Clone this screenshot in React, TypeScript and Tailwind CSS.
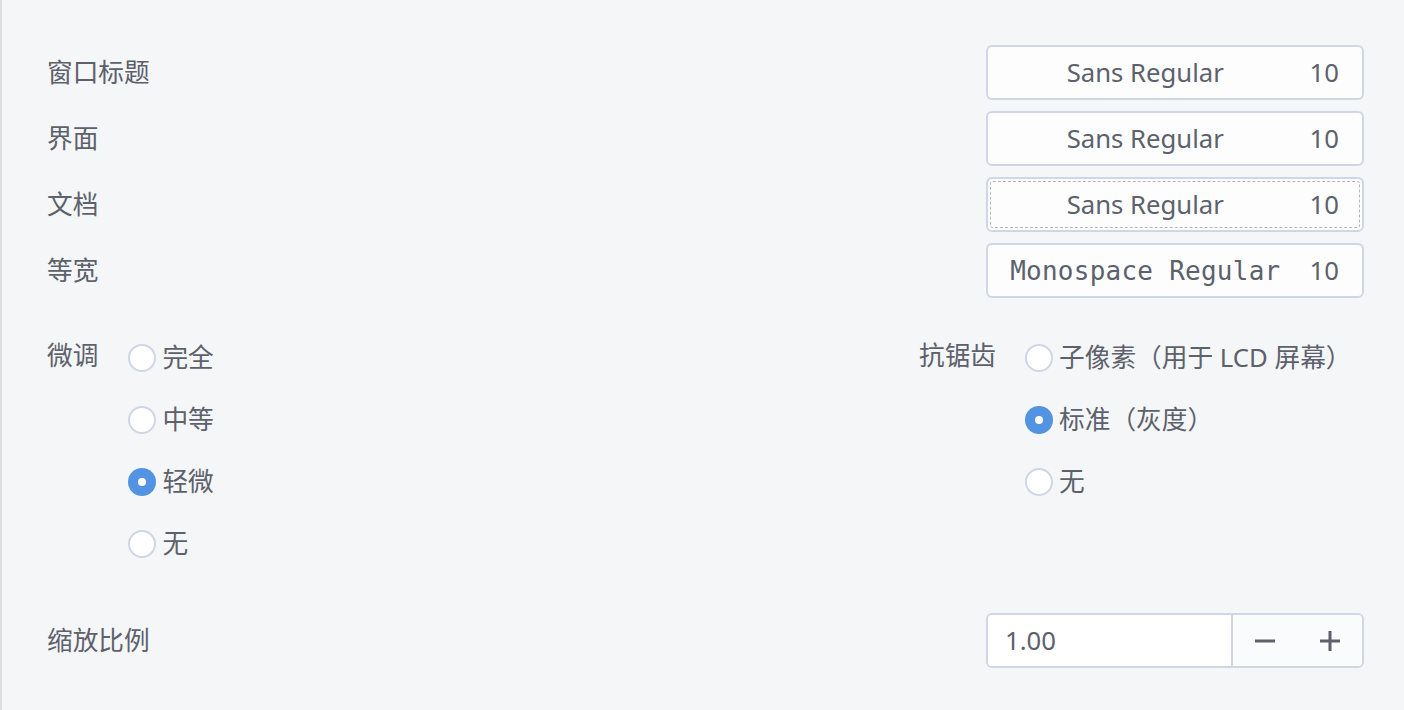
import React from "react";

const FONT = "font-['Noto_Sans','Noto_Sans_CJK_SC',sans-serif]";

function FontButton({ label, mono, focused }: { label: string; mono?: boolean; focused?: boolean }) {
  return (
    <div className="w-[378px] h-[55px] rounded-[6px] border-2 border-[#cfd6e6] bg-[#fdfdfe] p-[2px]">
      <div
        className={
          "h-full w-full rounded-[3px] flex items-center pr-[20px] " +
          (focused ? "border border-dashed border-[#b4b7bd]" : "border border-transparent")
        }
      >
        <div
          className={
            "flex-1 text-center " +
            (mono ? "font-['DejaVu_Sans_Mono',monospace] text-[26px] tracking-[0.25px]" : "")
          }
        >
          {label}
        </div>
        <div className="ml-[10px]">10</div>
      </div>
    </div>
  );
}

function Radio({ label, checked }: { label: string; checked?: boolean }) {
  return (
    <div className="h-[62px] flex items-center gap-[6px]">
      {checked ? (
        <div className="w-[28px] h-[28px] rounded-full bg-[#5294e2] flex items-center justify-center">
          <div className="w-[8px] h-[8px] rounded-full bg-white" />
        </div>
      ) : (
        <div className="w-[28px] h-[28px] rounded-full border-2 border-[#cfd6e6] bg-white" />
      )}
      <span>{label}</span>
    </div>
  );
}

export default function App() {
  return (
    <div
      className={
        "w-[1404px] h-[710px] bg-[#f5f6f7] border-l-2 border-[#dcdfe3] text-[#5c616c] text-[25.7px] leading-none " +
        FONT
      }
    >
      <div className="pl-[45px] pr-[40px] pt-[45px]">
        <div className="flex flex-col gap-[11px]">
          {[
            ["窗口标题", "Sans Regular", false, false],
            ["界面", "Sans Regular", false, false],
            ["文档", "Sans Regular", false, true],
            ["等宽", "Monospace Regular", true, false],
          ].map(([l, f, m, foc]) => (
            <div key={l as string} className="flex items-center justify-between">
              <span>{l as string}</span>
              <FontButton label={f as string} mono={m as boolean} focused={foc as boolean} />
            </div>
          ))}
        </div>

        <div className="flex mt-[29px]">
          <div className="w-[872px] flex gap-[30px]">
            <div className="h-[62px] flex items-center -mt-[2px]">微调</div>
            <div className="flex flex-col">
              <Radio label="完全" />
              <Radio label="中等" />
              <Radio label="轻微" checked />
              <Radio label="无" />
            </div>
          </div>
          <div className="flex gap-[29px]">
            <div className="h-[62px] flex items-center -mt-[2px]">抗锯齿</div>
            <div className="flex flex-col">
              <Radio label="子像素（用于 LCD 屏幕）" />
              <Radio label="标准（灰度）" checked />
              <Radio label="无" />
            </div>
          </div>
        </div>

        <div className="flex items-center justify-between mt-[38px]">
          <span>缩放比例</span>
          <div className="w-[378px] h-[55px] rounded-[6px] border-2 border-[#cfd6e6] flex overflow-hidden">
            <div className="w-[245px] bg-white flex items-center pl-[17px] border-r-2 border-[#cfd6e6]">1.00</div>
            <div className="flex-1 bg-[#fafbfc] flex items-center">
              <div className="flex-1 flex items-center justify-center">
                <svg width="20" height="20" viewBox="0 0 20 20">
                  <rect x="0" y="8.5" width="20" height="3" fill="#5c616c" />
                </svg>
              </div>
              <div className="flex-1 flex items-center justify-center">
                <svg width="20" height="20" viewBox="0 0 20 20">
                  <rect x="0" y="8.5" width="20" height="3" fill="#5c616c" />
                  <rect x="8.5" y="0" width="3" height="20" fill="#5c616c" />
                </svg>
              </div>
            </div>
          </div>
        </div>
      </div>
    </div>
  );
}
